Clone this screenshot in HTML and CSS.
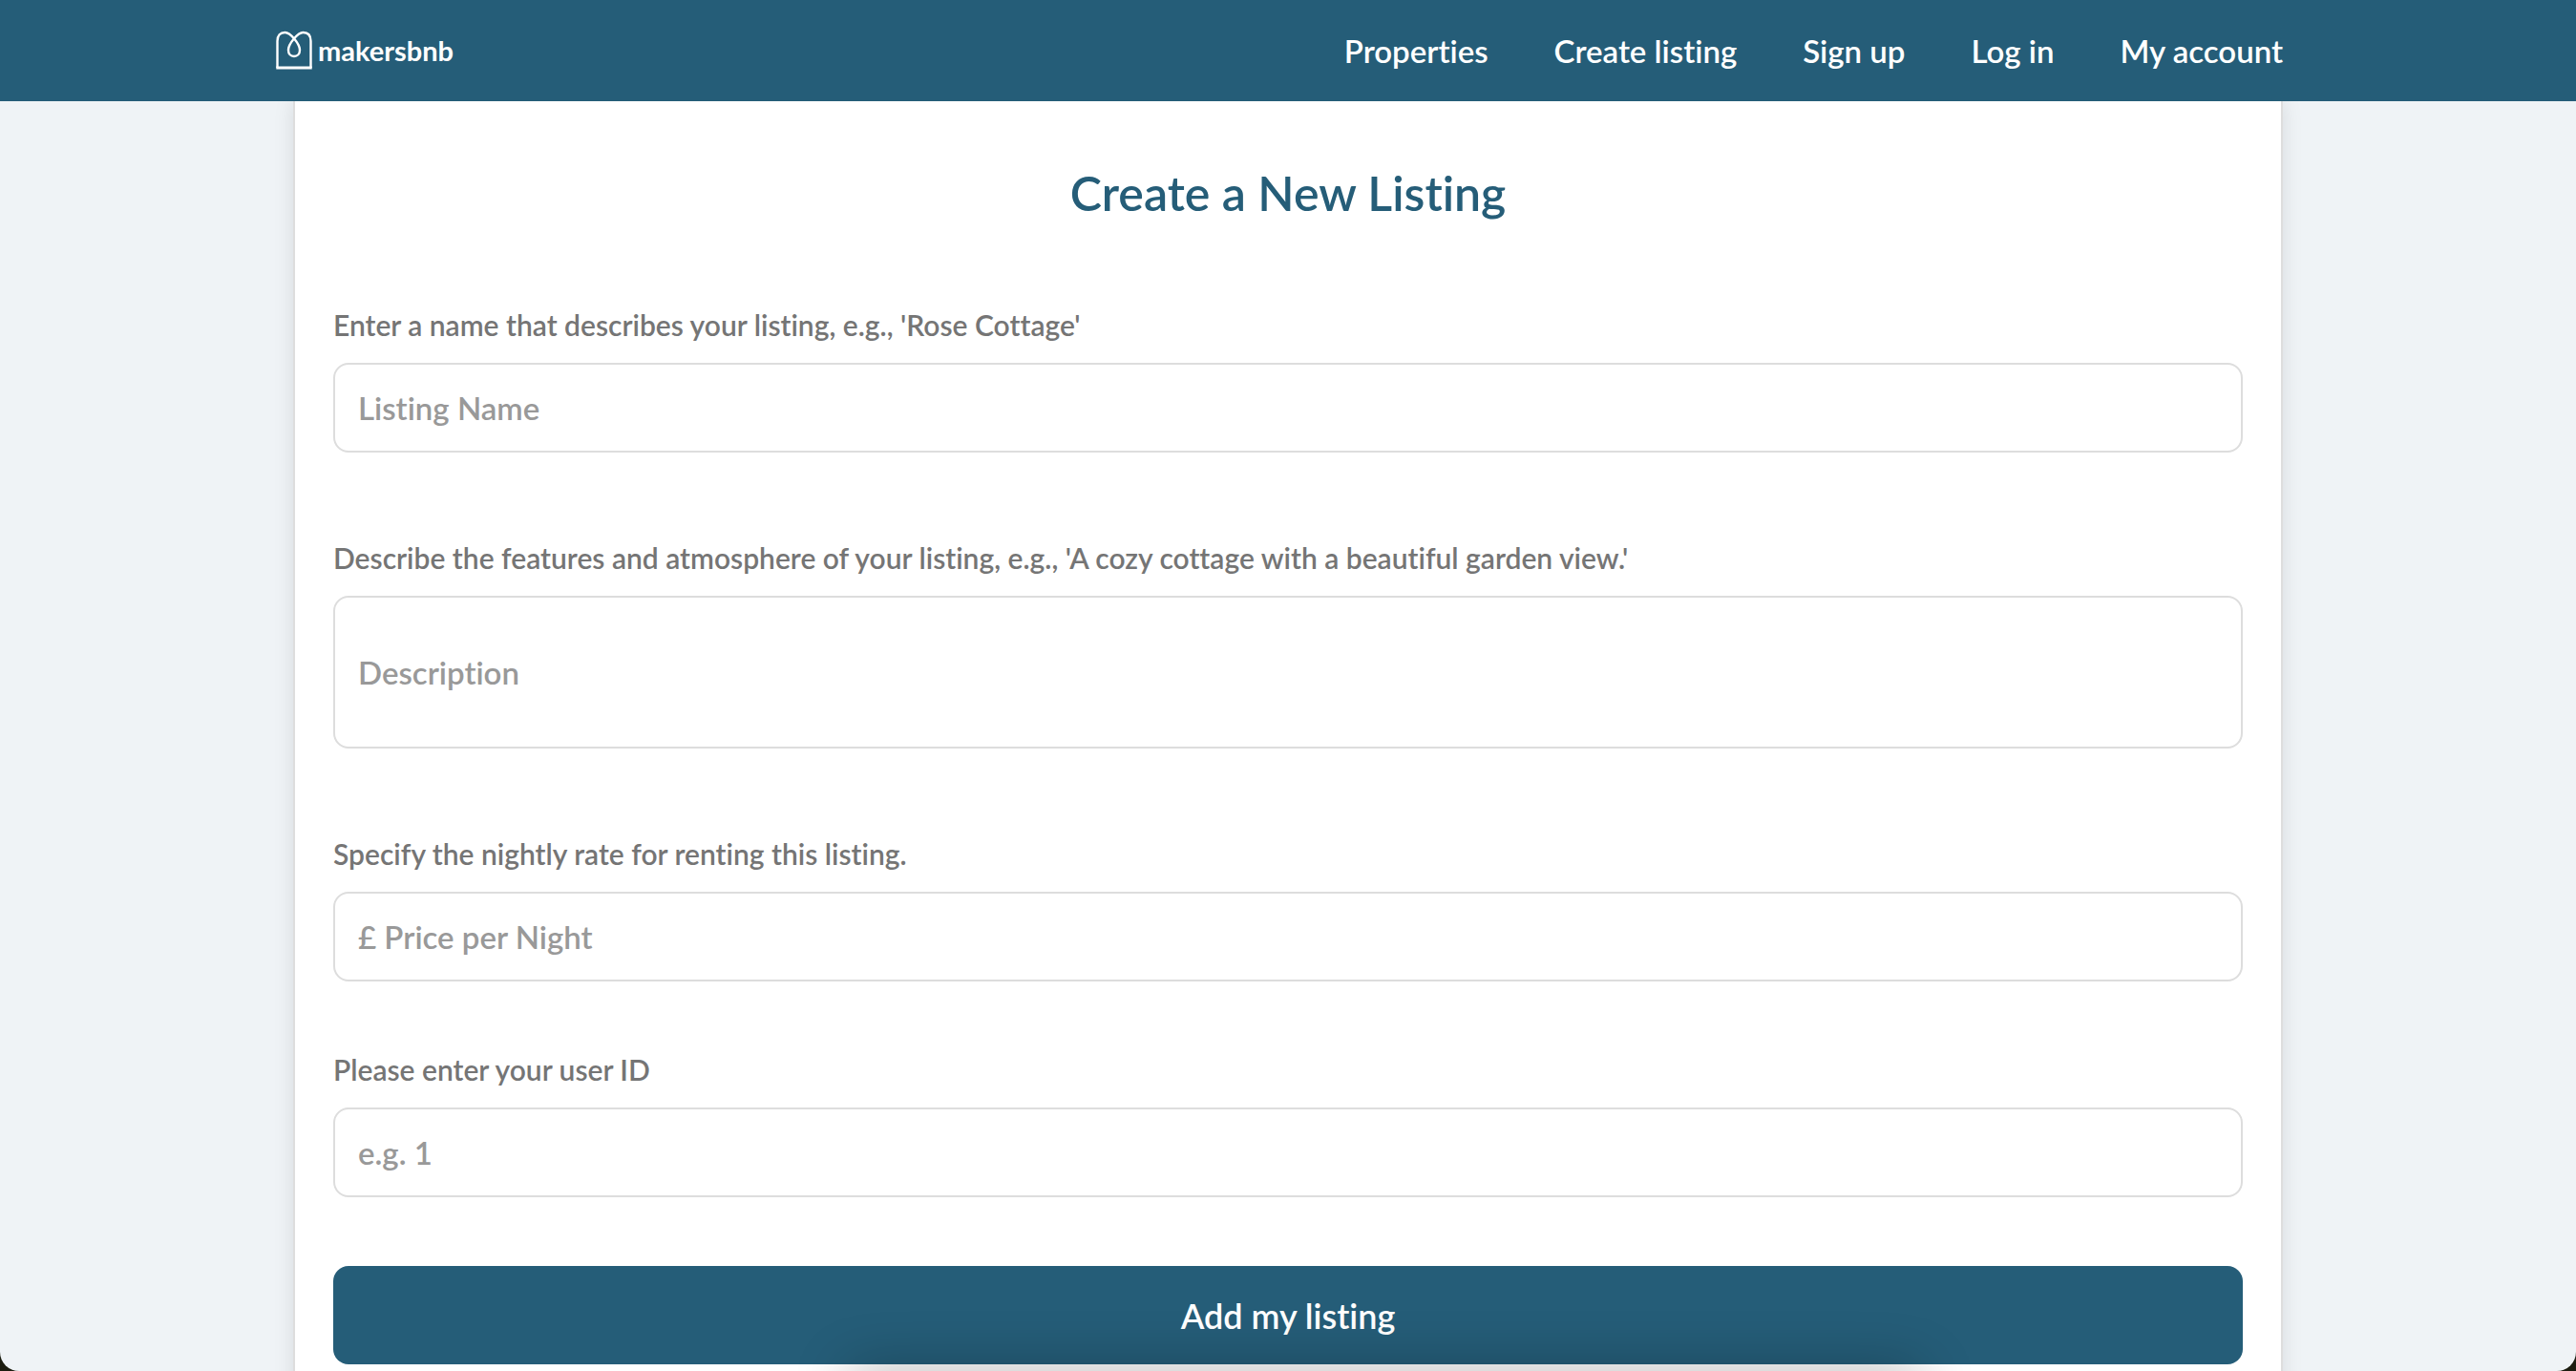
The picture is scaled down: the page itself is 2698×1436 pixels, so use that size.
FILE: index.html
```html
<!DOCTYPE html>
<html lang="en">
<head>
  <meta charset="utf-8">
  <meta name="viewport" content="width=device-width, initial-scale=1">
  <title>Create a New Listing | makersbnb</title>
  <link rel="stylesheet" href="styles.css">
</head>
<body>
  <div class="window">
    <header class="site-header">
      <div class="site-header-inner">
        <a class="logo" href="#">
          <svg class="logo-mark" viewBox="0 0 38 42" aria-hidden="true">
            <path d="M1.500 39V11C1.500 5 4.500 2 9.500 2C15 2 25 14 25 20.500C25 24.500 22.500 27 19 27C15.500 27 13 24.500 13 20.500C13 14 23 2 28.500 2C33.500 2 36.500 5 36.500 11V39" fill="none" stroke="currentColor" stroke-width="2.400"/>
            <path d="M0.300 39H37.700" fill="none" stroke="currentColor" stroke-width="3"/>
          </svg>
          <span class="logo-text">makersbnb</span>
        </a>
        <nav class="site-nav">
          <a href="#">Properties</a>
          <a href="#">Create listing</a>
          <a href="#">Sign up</a>
          <a href="#">Log in</a>
          <a href="#">My account</a>
        </nav>
      </div>
    </header>
    <main class="card">
      <h1 class="title">Create a New Listing</h1>
      <form class="form">
        <div class="field field-spaced">
          <label for="name">Enter a name that describes your listing, e.g., 'Rose Cottage'</label>
          <input id="name" type="text" placeholder="Listing Name">
        </div>
        <div class="field field-spaced">
          <label for="description">Describe the features and atmosphere of your listing, e.g., 'A cozy cottage with a beautiful garden view.'</label>
          <input id="description" class="tall" type="text" placeholder="Description">
        </div>
        <div class="field">
          <label for="price">Specify the nightly rate for renting this listing.</label>
          <input id="price" type="text" placeholder="£ Price per Night">
        </div>
        <div class="field">
          <label for="user-id">Please enter your user ID</label>
          <input id="user-id" type="text" placeholder="e.g. 1">
        </div>
        <button class="submit" type="submit">Add my listing</button>
      </form>
    </main>
    <div class="dock-shadow"></div>
  </div>
</body>
</html>
```

FILE: styles.css
```css
* {
  box-sizing: border-box;
}

html {
  background: #1c1d10;
}

body {
  margin: 0;
  font-family: Futura, Lato, sans-serif;
  font-weight: 600;
  font-variant-ligatures: none;
}

.window {
  position: relative;
  height: 100vh;
  overflow-x: hidden;
  overflow-y: auto;
  scrollbar-width: none;
  border-radius: 0 0 20px 20px;
  background: #eff3f6;
}

.site-header {
  position: sticky;
  top: 0;
  z-index: 1;
  background: #255d78;
  color: #fff;
}

.site-header-inner {
  display: flex;
  align-items: center;
  justify-content: space-between;
  max-width: 2120px;
  min-height: 106px;
  margin: 0 auto;
  padding-right: 18px;
}

.logo {
  display: flex;
  align-items: center;
  gap: 6px;
  color: inherit;
  text-decoration: none;
}

.logo-mark {
  width: 38px;
  height: 42px;
}

.logo-text {
  font-size: 29px;
  font-weight: 700;
  line-height: 36px;
}

.site-nav {
  display: flex;
  gap: 69px;
}

.site-nav a {
  color: inherit;
  font-size: 33px;
  line-height: 40px;
  text-decoration: none;
}

.card {
  max-width: 2084px;
  margin: 0 auto;
  padding: 70px 40px 40px;
  border: 2px solid #ddd;
  border-top: 0;
  background: #fff;
  box-shadow: 0 0 20px rgba(0, 0, 0, 0.1);
}

.title {
  margin: 0 0 90px;
  color: #255d78;
  font-size: 50px;
  font-weight: 600;
  line-height: 52px;
  text-align: center;
}

.form {
  display: flex;
  flex-direction: column;
  gap: 70px;
}

.field {
  display: flex;
  flex-direction: column;
  gap: 18px;
}

.field-spaced {
  margin-bottom: 18px;
}

.field label {
  color: #757575;
  font-size: 30px;
  line-height: 44px;
}

.field input {
  width: 100%;
  height: 94px;
  padding: 0 24px;
  border: 2px solid #ddd;
  border-radius: 16px;
  background: #fff;
  color: #333;
  font: inherit;
  font-size: 33px;
}

.field .tall {
  height: 160px;
}

.field input::placeholder {
  color: #999;
}

.submit {
  height: 103px;
  margin-top: 2px;
  border: 0;
  border-radius: 16px;
  background: #255d78;
  color: #fff;
  font: inherit;
  font-size: 36px;
}

/* soft shadow rising from below the bottom edge */
.dock-shadow {
  position: fixed;
  bottom: -40px;
  left: 33%;
  width: 1120px;
  height: 40px;
  box-shadow: 0 0 60px rgba(0, 0, 0, 0.32);
  pointer-events: none;
}
```
